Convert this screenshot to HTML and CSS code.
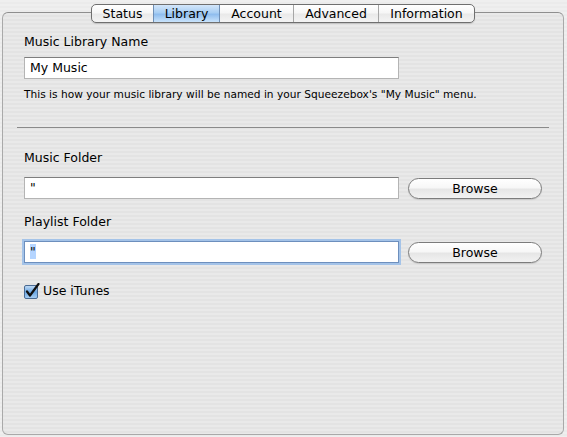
FILE: index.html
```html
<!DOCTYPE html>
<html>
<head>
<meta charset="utf-8">
<link rel="stylesheet" href="styles.css">
</head>
<body>
<div class="window">
  <div class="panel">
    <div class="tabs">
      <div class="tab tab-status">Status</div>
      <div class="tab tab-library selected">Library</div>
      <div class="tab tab-account">Account</div>
      <div class="tab tab-advanced">Advanced</div>
      <div class="tab tab-info">Information</div>
    </div>
    <div class="content">
      <div class="label label-first">Music Library Name</div>
      <div class="field field-name">My Music</div>
      <div class="help">This is how your music library will be named in your Squeezebox's "My Music" menu.</div>
    </div>
    <div class="separator"></div>
    <div class="content">
      <div class="label label-music">Music Folder</div>
      <div class="row row-music">
        <div class="field">"</div>
        <div class="button">Browse</div>
      </div>
      <div class="label label-playlist">Playlist Folder</div>
      <div class="row row-playlist">
        <div class="field focused"><span class="sel">"</span></div>
        <div class="button">Browse</div>
      </div>
      <div class="check">
        <svg class="box" width="16" height="16" viewBox="0 0 16 16">
          <defs>
            <linearGradient id="cb" x1="0" y1="0" x2="0" y2="1">
              <stop offset="0" stop-color="#c6def6"/>
              <stop offset="0.5" stop-color="#6aa6e3"/>
              <stop offset="1" stop-color="#a9d0f5"/>
            </linearGradient>
          </defs>
          <rect x="0.5" y="2.5" width="13" height="13" rx="1.5" fill="url(#cb)" stroke="#4a6a92"/>
          <path d="M3 8.5 L6 12.5 L14.5 1" fill="none" stroke="#111" stroke-width="2.2" stroke-linecap="round" stroke-linejoin="round"/>
        </svg>
        <span class="check-label">Use iTunes</span>
      </div>
    </div>
  </div>
</div>
</body>
</html>
```

FILE: styles.css
```css
* { box-sizing: border-box; }
html, body { margin: 0; padding: 0; }
body {
  width: 567px;
  height: 437px;
  overflow: hidden;
  font-family: "DejaVu Sans", "Liberation Sans", sans-serif;
  font-size: 12px;
  color: #000;
  background: repeating-linear-gradient(to bottom, #efefef 0, #efefef 2px, #ebebeb 2px, #ebebeb 4px);
}
.window {
  padding: 12px 3px 2px 2px;
  height: 437px;
}
.panel {
  height: 423px;
  border: 1px solid #a9a9a9;
  border-top-color: #8e8e8e;
  border-radius: 6px;
  background: repeating-linear-gradient(to bottom, #e9e9e9 0, #e9e9e9 2px, #e3e3e3 2px, #e3e3e3 4px);
  display: flex;
  flex-direction: column;
}
.tabs {
  align-self: center;
  display: flex;
  margin-top: -9px;
  height: 19px;
  border: 1px solid #6f6f6f;
  border-radius: 5px;
  overflow: hidden;
  background: linear-gradient(to bottom, #ffffff 0%, #f6f6f6 45%, #e9e9e9 55%, #f4f4f4 100%);
  box-shadow: 0 1px 1px rgba(0,0,0,0.15);
}
.tab {
  height: 17px;
  line-height: 18px;
  text-align: center;
  font-size: 12.5px;
  border-left: 1px solid #a6a6a6;
}
.tab-status { width: 61px; border-left: none; }
.tab-library { width: 67px; }
.tab-account { width: 73px; }
.tab-advanced { width: 85px; }
.tab-info { width: 96px; }
.tab.selected {
  background: linear-gradient(to bottom, #d3e6fa 0%, #a8cef3 45%, #8fbdee 55%, #c9e3fb 100%);
  border-left-color: #6f8fb5;
  border-right: 1px solid #6f8fb5;
}
.tab.selected + .tab { border-left: none; }
.content {
  padding-left: 21px;
  display: flex;
  flex-direction: column;
  align-items: flex-start;
}
.label {
  height: 16px;
  line-height: 16px;
  font-size: 12.5px;
}
.label-first { margin-top: 11px; }
.field {
  width: 375px;
  height: 22px;
  background: #fff;
  border: 1px solid #b4b4b4;
  border-top-color: #7e7e7e;
  padding-left: 5px;
  line-height: 20px;
  font-size: 12.5px;
}
.field-name { margin-top: 7px; }
.help {
  margin-top: 8px;
  font-size: 10.6px;
  line-height: 14px;
  letter-spacing: 0.02px;
}
.separator {
  margin: 26px 14px 0 14px;
  height: 1px;
  background: #8a8a8a;
}
.label-music { margin-top: 22px; }
.row {
  display: flex;
  align-items: center;
  gap: 9px;
}
.row-music { margin-top: 11px; }
.label-playlist { margin-top: 15px; }
.row-playlist { margin-top: 11px; }
.button {
  width: 134px;
  height: 21px;
  border: 1px solid #7c7c7c;
  border-radius: 11px;
  background: linear-gradient(to bottom, #ffffff 0%, #f7f7f7 45%, #e6e6e6 55%, #f2f2f2 100%);
  text-align: center;
  line-height: 19px;
  font-size: 12.5px;
  box-shadow: 0 1px 1px rgba(0,0,0,0.12);
}
.focused {
  border-color: #6d8fbd;
  box-shadow: 0 0 0 2px #a4c3e8;
}
.sel { background: #b5d5ff; }
.check {
  margin-top: 20px;
  display: flex;
  align-items: center;
  gap: 3px;
}
.box { display: block; }
.check-label {
  font-size: 12.5px;
  line-height: 16px;
}
```
